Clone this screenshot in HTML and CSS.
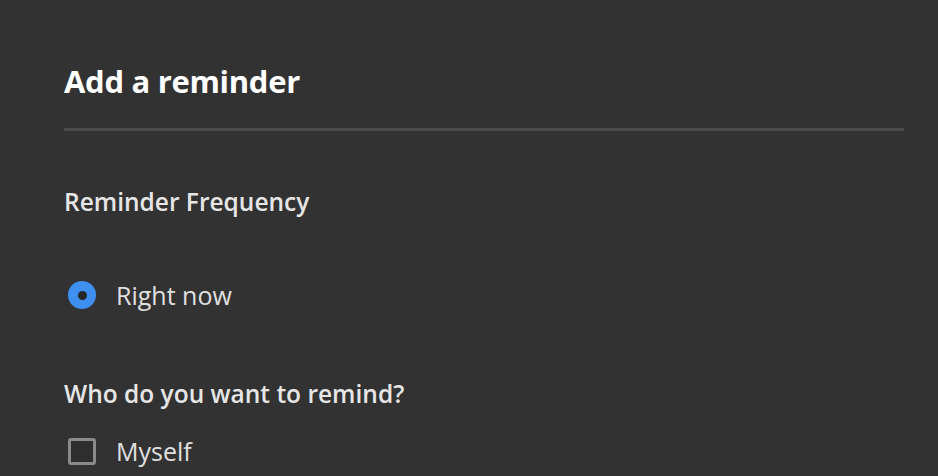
FILE: index.html
```html
<!DOCTYPE html>
<html>
<head>
<meta charset="utf-8">
<link rel="stylesheet" href="styles.css">
</head>
<body>
<div class="dialog">
  <h1 class="title">Add a reminder</h1>
  <div class="divider"></div>
  <h2 class="section-label">Reminder Frequency</h2>
  <label class="option radio-option">
    <span class="radio"><span class="radio-dot"></span></span>
    <span class="option-text">Right now</span>
  </label>
  <h2 class="section-label who">Who do you want to remind?</h2>
  <label class="option check-option">
    <span class="checkbox"></span>
    <span class="option-text">Myself</span>
  </label>
</div>
</body>
</html>
```
FILE: styles.css
```css
html, body {
  margin: 0;
  padding: 0;
  background: #323232;
  height: 100%;
  overflow: hidden;
}
body {
  font-family: "Open Sans", "Noto Sans", sans-serif;
  color: #e8e8e8;
}
.dialog {
  padding: 61px 34px 0 64px;
  display: flex;
  flex-direction: column;
}
.title {
  margin: 0;
  font-size: 31px;
  line-height: 40px;
  font-weight: 700;
  color: #ffffff;
  letter-spacing: -0.3px;
}
.divider {
  height: 3px;
  background: #4a4a4a;
  margin-top: 27px;
}
.section-label {
  margin: 55px 0 0 0;
  font-size: 24.5px;
  line-height: 32px;
  font-weight: 600;
  color: #e6e6e6;
}
.section-label.who {
  margin-top: 67px;
}
.option {
  display: flex;
  align-items: center;
  gap: 20px;
  font-size: 25px;
  line-height: 32px;
  color: #e0e0e0;
  padding-left: 4px;
}
.radio-option {
  margin-top: 61px;
}
.check-option {
  margin-top: 25px;
}
.radio {
  width: 28px;
  height: 28px;
  border-radius: 50%;
  background: #3f8ff0;
  display: flex;
  align-items: center;
  justify-content: center;
}
.radio-dot {
  width: 9px;
  height: 9px;
  border-radius: 50%;
  background: #262626;
}
.checkbox {
  width: 22px;
  height: 21px;
  border: 3px solid #8a8a8a;
  border-radius: 3px;
  background: #2e2e2e;
}
```
